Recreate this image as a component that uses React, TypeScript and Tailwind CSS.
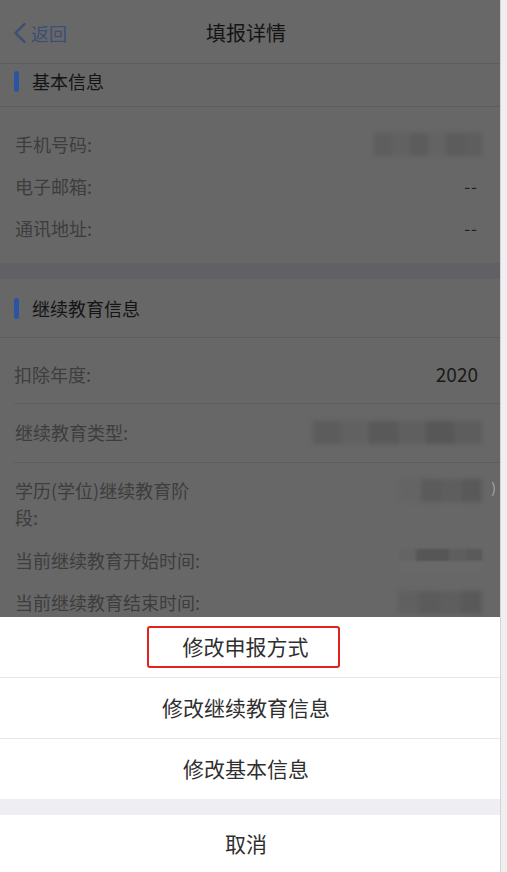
import { ReactNode } from "react";

const font = { fontFamily: '"Noto Sans CJK SC", "Noto Sans", sans-serif' };

function Blur({ w, tones }: { w: number; tones: string[] }) {
  // pixelated / blurred value placeholder
  return (
    <div className="flex h-[23px] blur-[2px]" style={{ width: w }}>
      {tones.map((t, i) => (
        <div key={i} className="h-full flex-1" style={{ backgroundColor: t }} />
      ))}
    </div>
  );
}

function SectionTitle({ children, className }: { children: ReactNode; className: string }) {
  return (
    <div className={`flex items-center border-b border-[#5d5d5d] pl-[14px] ${className}`}>
      <div className="h-[21px] w-[5px] rounded-full bg-[#2b55a3]" />
      <span className="ml-[13px] text-[18px] leading-[24px] text-[#141414]">{children}</span>
    </div>
  );
}

function Row({ label, children, className = "" }: { label: ReactNode; children?: ReactNode; className?: string }) {
  return (
    <div className={`flex items-center justify-between ${className}`}>
      <span className="text-[18px] leading-[24px] text-[#3d3d3d]">{label}</span>
      <div className="flex items-center">{children}</div>
    </div>
  );
}

export default function App() {
  const sheetItems = ["修改申报方式", "修改继续教育信息", "修改基本信息"];

  return (
    <div className="flex h-[872px] w-[507px] overflow-hidden bg-[#676767]" style={font}>
      <div className="relative h-full w-[500px] overflow-hidden">
        {/* nav bar */}
        <div className="relative flex h-[64px] items-center border-b border-[#5d5d5d] bg-[#686868]">
          <div className="flex items-center pl-[13px] pt-[2px] text-[#3b4e74]">
            <svg width="14" height="22" viewBox="0 0 14 22" fill="none">
              <path d="M11.5 2 L2.5 11 L11.5 20" stroke="currentColor" strokeWidth="2.4" strokeLinecap="round" strokeLinejoin="round" />
            </svg>
            <span className="ml-[4px] text-[18px] leading-[24px]">返回</span>
          </div>
          <div className="absolute inset-x-0 top-[20px] pr-[8px] text-center text-[20px] leading-[26px] text-[#141414]">填报详情</div>
        </div>

        {/* 基本信息 */}
        <SectionTitle className="h-[43px] pb-[8px]">基本信息</SectionTitle>
        <div className="px-[15px] pb-[14px] pt-[16px]">
          <Row label="手机号码:" className="h-[42px]">
            <div className="mr-[3px]">
              <Blur w={108} tones={["#5e5e5e", "#616161", "#5c5c5c", "#636363", "#5c5c5c", "#5e5e5e"]} />
            </div>
          </Row>
          <Row label="电子邮箱:" className="h-[42px]">
            <span className="pr-[7px] text-[17px] tracking-[1px] text-[#1e1e1e]">--</span>
          </Row>
          <Row label="通讯地址:" className="h-[42px]">
            <span className="pr-[7px] text-[17px] tracking-[1px] text-[#1e1e1e]">--</span>
          </Row>
        </div>
        <div className="h-[16px] bg-[#616165]" />

        {/* 继续教育信息 */}
        <SectionTitle className="h-[59px]">继续教育信息</SectionTitle>
        <div className="pl-[14px]">
          <Row label="扣除年度:" className="border-b border-[#5d5d5d] pb-[17px] pr-[22px] pt-[24px]">
            <span className="text-[19px] leading-[24px] text-[#1a1a1a]">2020</span>
          </Row>
          <Row label="继续教育类型:" className="border-b border-[#5d5d5d] pb-[18px] pl-[1px] pr-[18px] pt-[16px]">
            <Blur w={169} tones={["#5c5c5c", "#616161", "#595959", "#5f5f5f", "#575757", "#5d5d5d"]} />
          </Row>
          <div className="flex items-start justify-between pl-[1px] pr-[18px] pt-[14px]">
            <span className="text-[18px] leading-[27px] text-[#3d3d3d]">
              学历(学位)继续教育阶
              <br />
              段:
            </span>
            <div className="relative mt-[2px]">
              <Blur w={82} tones={["#646464", "#5b5b5b", "#5e5e5e", "#595959"]} />
              <span className="absolute right-[-14px] top-[-2px] text-[14px] text-[#a8a8a8]">)</span>
            </div>
          </div>
          <Row label="当前继续教育开始时间:" className="mt-[8px] h-[42px] pl-[1px] pr-[18px]">
            <div className="flex h-[23px] w-[82px] flex-col blur-[1px]">
              <div className="flex h-[12px]">
                <div className="flex-1 bg-[#646464]" />
                <div className="flex-[2] bg-[#565656]" />
                <div className="flex-1 bg-[#5e5e5e]" />
                <div className="flex-1 bg-[#5a5a5a]" />
              </div>
              <div className="flex-1 bg-[#696969]" />
            </div>
          </Row>
          <Row label="当前继续教育结束时间:" className="h-[42px] pl-[1px] pr-[18px]">
            <Blur w={84} tones={["#606060", "#5b5b5b", "#5e5e5e", "#595959"]} />
          </Row>
        </div>

        {/* action sheet */}
        <div className="absolute inset-x-0 bottom-0 bg-white">
          {sheetItems.map((item, i) => (
            <div
              key={item}
              className={`flex items-center justify-center pb-[3px] pr-[8px] ${i === 2 ? "h-[60px]" : "h-[61px] border-b border-[#e6e6e6]"}`}
            >
              {i === 0 ? (
                <div className="mr-[6px] mt-[3px] flex h-[42px] w-[193px] items-center justify-center rounded-[3px] border-[2.5px] border-[#e0231d] pb-[2px] pl-[5px]">
                  <span className="text-[21px] leading-[28px] text-[#2f2f2f]">{item}</span>
                </div>
              ) : (
                <span className="text-[21px] leading-[28px] text-[#2f2f2f]">{item}</span>
              )}
            </div>
          ))}
          <div className="h-[16px] bg-[#eeeef3]" />
          <div className="flex h-[57px] items-center justify-center pb-[2px] pr-[8px]">
            <span className="text-[21px] leading-[28px] text-[#2f2f2f]">取消</span>
          </div>
        </div>
      </div>

      {/* right edge strip */}
      <div className="h-full w-[7px] border-l border-[#d4d4d4] bg-[#efefef]" />
    </div>
  );
}
